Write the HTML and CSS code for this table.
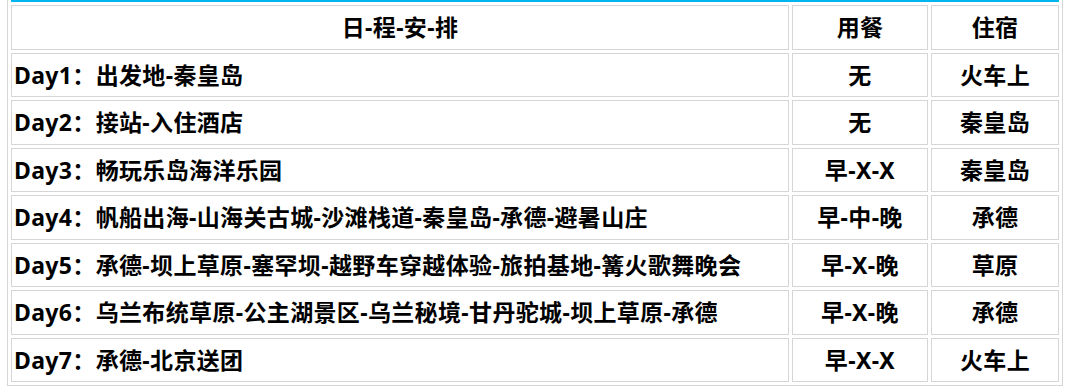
FILE: index.html
```html
<!DOCTYPE html>
<html lang="zh-CN">
<head>
<meta charset="utf-8">
<title>日程安排</title>
<link rel="stylesheet" href="styles.css">
</head>
<body>
<div class="page">
<table class="schedule">
  <tr class="bar-row"><td class="bar" colspan="3"></td></tr>
  <tr class="head">
    <td class="c-trip center">日-程-安-排</td>
    <td class="c-meal center">用餐</td>
    <td class="c-stay center">住宿</td>
  </tr>
  <tr><td>Day1：出发地-秦皇岛</td><td class="center">无</td><td class="center">火车上</td></tr>
  <tr><td>Day2：接站-入住酒店</td><td class="center">无</td><td class="center">秦皇岛</td></tr>
  <tr><td>Day3：畅玩乐岛海洋乐园</td><td class="center">早-X-X</td><td class="center">秦皇岛</td></tr>
  <tr><td>Day4：帆船出海-山海关古城-沙滩栈道-秦皇岛-承德-避暑山庄</td><td class="center">早-中-晚</td><td class="center">承德</td></tr>
  <tr><td>Day5：承德-坝上草原-塞罕坝-越野车穿越体验-旅拍基地-篝火歌舞晚会</td><td class="center">早-X-晚</td><td class="center">草原</td></tr>
  <tr><td>Day6：乌兰布统草原-公主湖景区-乌兰秘境-甘丹驼城-坝上草原-承德</td><td class="center">早-X-晚</td><td class="center">承德</td></tr>
  <tr><td>Day7：承德-北京送团</td><td class="center">早-X-X</td><td class="center">火车上</td></tr>
</table>
</div>
</body>
</html>
```
FILE: styles.css
```css
html, body {
  margin: 0;
  padding: 0;
  background: #ffffff;
}
.page {
  padding-left: 7px;
  overflow: hidden;
  height: 392px;
}
.schedule {
  margin-top: -4px;
  border: 1px solid #d6d6d6;
  border-collapse: separate;
  border-spacing: 3px;
  font-family: "Noto Sans", "Noto Sans CJK SC", sans-serif;
  font-weight: bold;
  font-size: 23px;
  letter-spacing: 0.35px;
  color: #000;
}
.schedule td {
  box-sizing: border-box;
  border: 1px solid #d6d6d6;
  padding: 4px 2px;
  line-height: 34.5px;
  white-space: nowrap;
  text-align: left;
}
.schedule td.center {
  text-align: center;
}
.schedule td.bar {
  height: 0;
  padding: 0;
  border: none;
  border-bottom: 2px solid #00b4ef;
  line-height: 0;
  font-size: 0;
}
.c-trip { width: 778px; }
.c-meal { width: 136px; }
.c-stay { width: 128px; }
```
